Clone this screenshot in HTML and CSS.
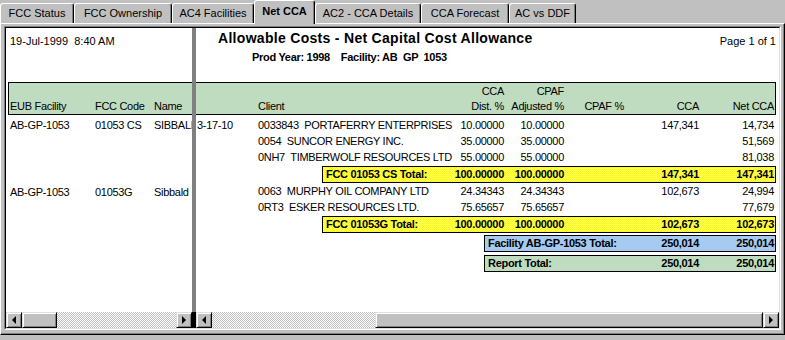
FILE: index.html
```html
<!DOCTYPE html>
<html lang="en">
<head>
    <meta charset="UTF-8">
    <title>Net CCA</title>
    <link rel="stylesheet" href="styles.css">
</head>
<body>
<div class="tabs">
    <div class="tab">FCC Status</div>
    <div class="tab">FCC Ownership</div>
    <div class="tab">AC4 Facilities</div>
    <div class="tab tab-active">Net CCA</div>
    <div class="tab">AC2 - CCA Details</div>
    <div class="tab">CCA Forecast</div>
    <div class="tab">AC vs DDF</div>
</div>

<div class="panel">
    <div class="frame">
        <div class="frame-inner">

            <!-- left pane: facility columns -->
            <div class="pane pane-left">
                <div class="report">
                    <div class="head-left">19-Jul-1999  8:40 AM</div>
                    <div class="band band-head band-head-left grid-left">
                        <span>EUB Facility</span><span>FCC Code</span><span>Name</span>
                    </div>
                    <div class="rows rows-left">
                        <div class="row grid-left"><span>AB-GP-1053</span><span>01053 CS</span><span>SIBBALD</span></div>
                        <div class="row"></div>
                        <div class="row"></div>
                        <div class="total-space"></div>
                        <div class="row grid-left"><span>AB-GP-1053</span><span>01053G</span><span>Sibbald</span></div>
                    </div>
                </div>
                <div class="scrollbar">
                    <div class="sb-btn"><span class="arrow-left"></span></div>
                    <div class="sb-thumb thumb-left"></div>
                    <div class="sb-track"></div>
                    <div class="sb-btn"><span class="arrow-right"></span></div>
                </div>
            </div>

            <div class="splitter"></div>

            <!-- right pane: clients and amounts -->
            <div class="pane pane-right">
                <div class="report">
                    <div class="head-right">
                        <div class="titles">
                            <div class="title">Allowable Costs - Net Capital Cost Allowance</div>
                            <div class="subtitle">Prod Year: 1998    Facility: AB  GP  1053</div>
                        </div>
                        <div class="page-no">Page 1 of 1</div>
                    </div>
                    <div class="band band-head band-head-right grid-right">
                        <span></span>
                        <span>Client</span>
                        <span class="num">CCA<br>Dist. %</span>
                        <span class="num">CPAF<br>Adjusted %</span>
                        <span class="num">CPAF %</span>
                        <span class="num">CCA</span>
                        <span class="num">Net CCA</span>
                    </div>
                    <div class="rows">
                        <div class="row grid-right">
                            <span class="loc">3-17-10</span><span>0033843  PORTAFERRY ENTERPRISES</span>
                            <span class="num">10.00000</span><span class="num">10.00000</span><span></span>
                            <span class="num">147,341</span><span class="num">14,734</span>
                        </div>
                        <div class="row grid-right">
                            <span></span><span>0054  SUNCOR ENERGY INC.</span>
                            <span class="num">35.00000</span><span class="num">35.00000</span><span></span>
                            <span></span><span class="num">51,569</span>
                        </div>
                        <div class="row grid-right">
                            <span></span><span>0NH7  TIMBERWOLF RESOURCES LTD</span>
                            <span class="num">55.00000</span><span class="num">55.00000</span><span></span>
                            <span></span><span class="num">81,038</span>
                        </div>
                        <div class="total total-fcc">
                            <span class="label">FCC 01053 CS Total:</span>
                            <span class="num">100.00000</span><span class="num">100.00000</span><span></span>
                            <span class="num">147,341</span><span class="num">147,341</span>
                        </div>
                        <div class="row grid-right">
                            <span></span><span>0063  MURPHY OIL COMPANY LTD</span>
                            <span class="num">24.34343</span><span class="num">24.34343</span><span></span>
                            <span class="num">102,673</span><span class="num">24,994</span>
                        </div>
                        <div class="row grid-right">
                            <span></span><span>0RT3  ESKER RESOURCES LTD.</span>
                            <span class="num">75.65657</span><span class="num">75.65657</span><span></span>
                            <span></span><span class="num">77,679</span>
                        </div>
                        <div class="total total-fcc">
                            <span class="label">FCC 01053G Total:</span>
                            <span class="num">100.00000</span><span class="num">100.00000</span><span></span>
                            <span class="num">102,673</span><span class="num">102,673</span>
                        </div>
                        <div class="total total-sum total-facility">
                            <span class="label">Facility AB-GP-1053 Total:</span>
                            <span class="num">250,014</span><span class="num">250,014</span>
                        </div>
                        <div class="total total-sum total-report">
                            <span class="label">Report Total:</span>
                            <span class="num">250,014</span><span class="num">250,014</span>
                        </div>
                    </div>
                </div>
                <div class="scrollbar">
                    <div class="sb-btn"><span class="arrow-left"></span></div>
                    <div class="sb-track"></div>
                    <div class="sb-thumb thumb-right"></div>
                    <div class="sb-btn"><span class="arrow-right"></span></div>
                </div>
            </div>

        </div>
    </div>
</div>
</body>
</html>
```

FILE: styles.css
```css
* {
    box-sizing: border-box;
}

body {
    margin: 0;
    width: 785px;
    height: 340px;
    overflow: hidden;
    background: #c0c0c0;
    color: #000;
    font-family: "Liberation Sans", Arial, sans-serif;
    font-size: 11px;
}

/*tabs*/

.tabs {
    display: flex;
    align-items: flex-end;
    height: 23px;
}

.tab {
    height: 20px;
    display: flex;
    align-items: center;
    justify-content: center;
    padding-bottom: 1px;
    border: 1px solid #fff;
    border-right-color: #000;
    border-bottom: none;
    border-radius: 3px 3px 0 0;
    box-shadow: inset -1px 0 #808080;
    white-space: nowrap;
}

.tab:nth-child(1) { width: 74px; }
.tab:nth-child(2) { width: 98px; }
.tab:nth-child(3) { width: 82px; }
.tab:nth-child(4) { width: 61px; }
.tab:nth-child(5) { width: 106px; }
.tab:nth-child(6) { width: 88px; }
.tab:nth-child(7) { width: 67px; }

.tab-active {
    position: relative;
    z-index: 1;
    height: 24px;
    margin-bottom: -1px;
    padding-bottom: 3px;
    background: #c0c0c0;
    font-weight: bold;
}

/*panel and frame*/

.panel {
    height: 312px;
    padding: 2px 3px 4px 3px;
    border: 1px solid;
    border-color: #fff #000 #000 #fff;
    box-shadow: inset -1px -1px #808080;
}

.frame {
    height: 100%;
    border: 1px solid;
    border-color: #808080 #fff #fff #808080;
}

.frame-inner {
    height: 100%;
    display: flex;
    border: 1px solid;
    border-color: #000 #dfdfdf #dfdfdf #000;
}

.pane {
    display: flex;
    flex-direction: column;
}

.pane-left {
    width: 186px;
}

.pane-right {
    flex: 1;
    min-width: 0;
}

.splitter {
    width: 4px;
    background: #808080;
    border-bottom: 16px solid #000;
}

.report {
    flex: 1;
    overflow: hidden;
    background: #fff;
    white-space: nowrap;
    letter-spacing: -0.3px;
}

.report span, .head-left, .subtitle {
    white-space: pre;
}

/*report header*/

.head-left {
    height: 54px;
    padding: 7px 0 0 4px;
    line-height: 13px;
    letter-spacing: 0;
}

.head-right {
    height: 54px;
    display: flex;
    justify-content: space-between;
    padding: 2px 3px 0 22px;
}

.title {
    font-size: 14px;
    font-weight: bold;
    line-height: 17px;
    letter-spacing: 0.3px;
}

.subtitle {
    margin: 4px 0 0 34px;
    font-weight: bold;
    line-height: 13px;
}

.page-no {
    padding-top: 5px;
    line-height: 13px;
    letter-spacing: 0;
}

/*columns*/

.band {
    border: 1px solid #000;
    background: #c0dcc0;
}

.band-head {
    height: 33px;
    padding-top: 1px;
    line-height: 15px;
    align-items: end;
}

.band-head-left {
    margin-left: 2px;
    padding-left: 1px;
    border-right: none;
}

.band-head-right {
    width: 580px;
    padding-right: 1px;
    border-left: none;
}

.grid-left {
    display: grid;
    grid-template-columns: 85px 59px auto;
}

.grid-right {
    display: grid;
    grid-template-columns: 62px 185px 61px 60px 60px 75px 75px;
}

.num {
    text-align: right;
}

.loc {
    padding-left: 1px;
}

/*rows*/

.rows {
    padding-top: 2px;
}

.rows-left {
    padding-left: 4px;
}

.row {
    height: 16px;
    line-height: 16px;
}

.total-space {
    height: 19px;
}

.total {
    display: grid;
    height: 17px;
    margin-top: 1px;
    padding-right: 1px;
    border: 1px solid #000;
    font-weight: bold;
    line-height: 15px;
}

.total .label {
    padding-left: 3px;
}

.total-fcc {
    width: 454px;
    margin-left: 126px;
    grid-template-columns: 120px 61px 60px 60px 75px 75px;
    background: repeating-conic-gradient(#ffff00 0 25%, #ffff70 0 50%) 0 0 / 2px 2px;
}

.total-sum {
    width: 292px;
    margin-left: 288px;
    grid-template-columns: 139px 75px 75px;
}

.total-facility {
    margin-top: 2px;
    background: #a6caf0;
}

.total-report {
    margin-top: 3px;
    background: #c0dcc0;
}

/*scrollbars*/

.scrollbar {
    height: 16px;
    display: flex;
}

.sb-btn, .sb-thumb {
    height: 16px;
    background: #c0c0c0;
    border: 1px solid;
    border-color: #dfdfdf #000 #000 #dfdfdf;
    box-shadow: inset 1px 1px #fff, inset -1px -1px #808080;
}

.sb-btn {
    width: 16px;
    display: flex;
    align-items: center;
    justify-content: center;
}

.sb-track {
    flex: 1;
    background: repeating-conic-gradient(#fff 0 25%, #c0c0c0 0 50%) 0 0 / 2px 2px;
}

.thumb-left {
    width: 35px;
}

.thumb-right {
    width: 388px;
}

.arrow-left, .arrow-right {
    width: 0;
    height: 0;
    border-style: solid;
    border-color: transparent;
}

.arrow-left {
    border-width: 4px 4px 4px 0;
    border-right-color: #000;
}

.arrow-right {
    border-width: 4px 0 4px 4px;
    border-left-color: #000;
}
```
